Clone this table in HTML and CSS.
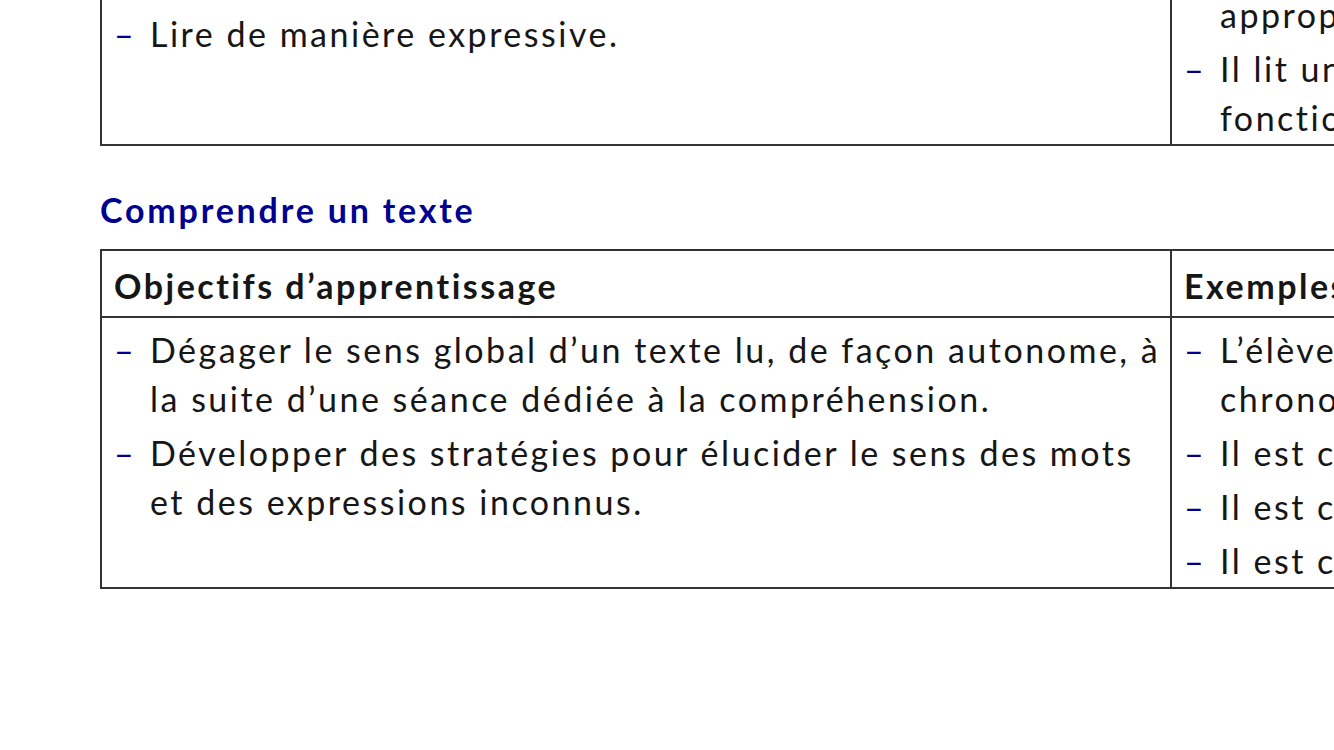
FILE: index.html
```html
<!DOCTYPE html>
<html lang="fr">
<head>
<meta charset="utf-8">
<title>Programme de français</title>
<link rel="stylesheet" href="styles.css">
</head>
<body>
<main class="doc">
  <table class="grid">
    <colgroup><col class="col-obj"><col class="col-ex"></colgroup>
    <tbody>
      <tr>
        <td>
          <ul class="dash">
            <li>Lire à voix haute un texte court avec fluidité.</li>
            <li class="spaced">Lire de manière expressive.</li>
          </ul>
        </td>
        <td>
          <ul class="dash">
            <li>L’élève lit à voix haute un texte préparé.</li>
            <li>Il respecte la ponctuation et adopte un débit<br>approprié.</li>
            <li>Il lit un texte en mettant le ton en<br>fonction des personnages.</li>
          </ul>
        </td>
      </tr>
    </tbody>
  </table>

  <h2 class="section-title">Comprendre un texte</h2>

  <table class="grid">
    <colgroup><col class="col-obj"><col class="col-ex"></colgroup>
    <thead>
      <tr>
        <th>Objectifs d’apprentissage</th>
        <th>Exemples de réussite</th>
      </tr>
    </thead>
    <tbody>
      <tr>
        <td>
          <ul class="dash">
            <li>Dégager le sens global d’un texte lu, de façon autonome, à la suite d’une séance dédiée à la compréhension.</li>
            <li>Développer des stratégies pour élucider le sens des mots et des expressions inconnus.</li>
          </ul>
        </td>
        <td>
          <ul class="dash">
            <li>L’élève remet dans l’ordre<br>chronologique les étapes d’une histoire.</li>
            <li>Il est capable de reformuler l’histoire.</li>
            <li>Il est capable d’identifier les personnages.</li>
            <li>Il est capable d’expliquer un mot inconnu.</li>
          </ul>
        </td>
      </tr>
    </tbody>
  </table>
</main>
</body>
</html>
```

FILE: styles.css
```css
html, body {
  margin: 0;
  padding: 0;
  overflow: hidden;
  background: #ffffff;
}

body {
  font-family: "Lato", "Noto Sans", "DejaVu Sans", sans-serif;
  color: #161616;
  font-size: 34px;
  letter-spacing: 2.5px;
}

.doc {
  margin-top: -122px;
  padding-left: 100px;
  width: 2300px;
}

.grid {
  border-collapse: collapse;
  table-layout: fixed;
  width: 2070px;
}

.col-obj { width: 1070px; }
.col-ex { width: 1000px; }

.grid th,
.grid td {
  border: 2px solid #333333;
  vertical-align: top;
  text-align: left;
}

.grid th {
  font-weight: 700;
  letter-spacing: 2.5px;
  line-height: 49px;
  padding: 10px 12px 6px 12px;
}

.grid td {
  padding: 7px 8px 2px 12px;
}

.dash {
  list-style: none;
  margin: 0;
  padding: 0;
}

.dash li {
  display: flex;
  line-height: 49px;
  margin-bottom: 5px;
}

.dash li:last-child {
  margin-bottom: 0;
}

.dash li::before {
  content: "–";
  color: #000091;
  flex: 0 0 36px;
  letter-spacing: 0;
}

.dash li.spaced {
  margin-top: 73px;
}

.section-title {
  color: #000091;
  font-size: 34px;
  font-weight: 700;
  letter-spacing: 2.8px;
  line-height: 40px;
  margin: 44px 0 19px 0;
}
```
